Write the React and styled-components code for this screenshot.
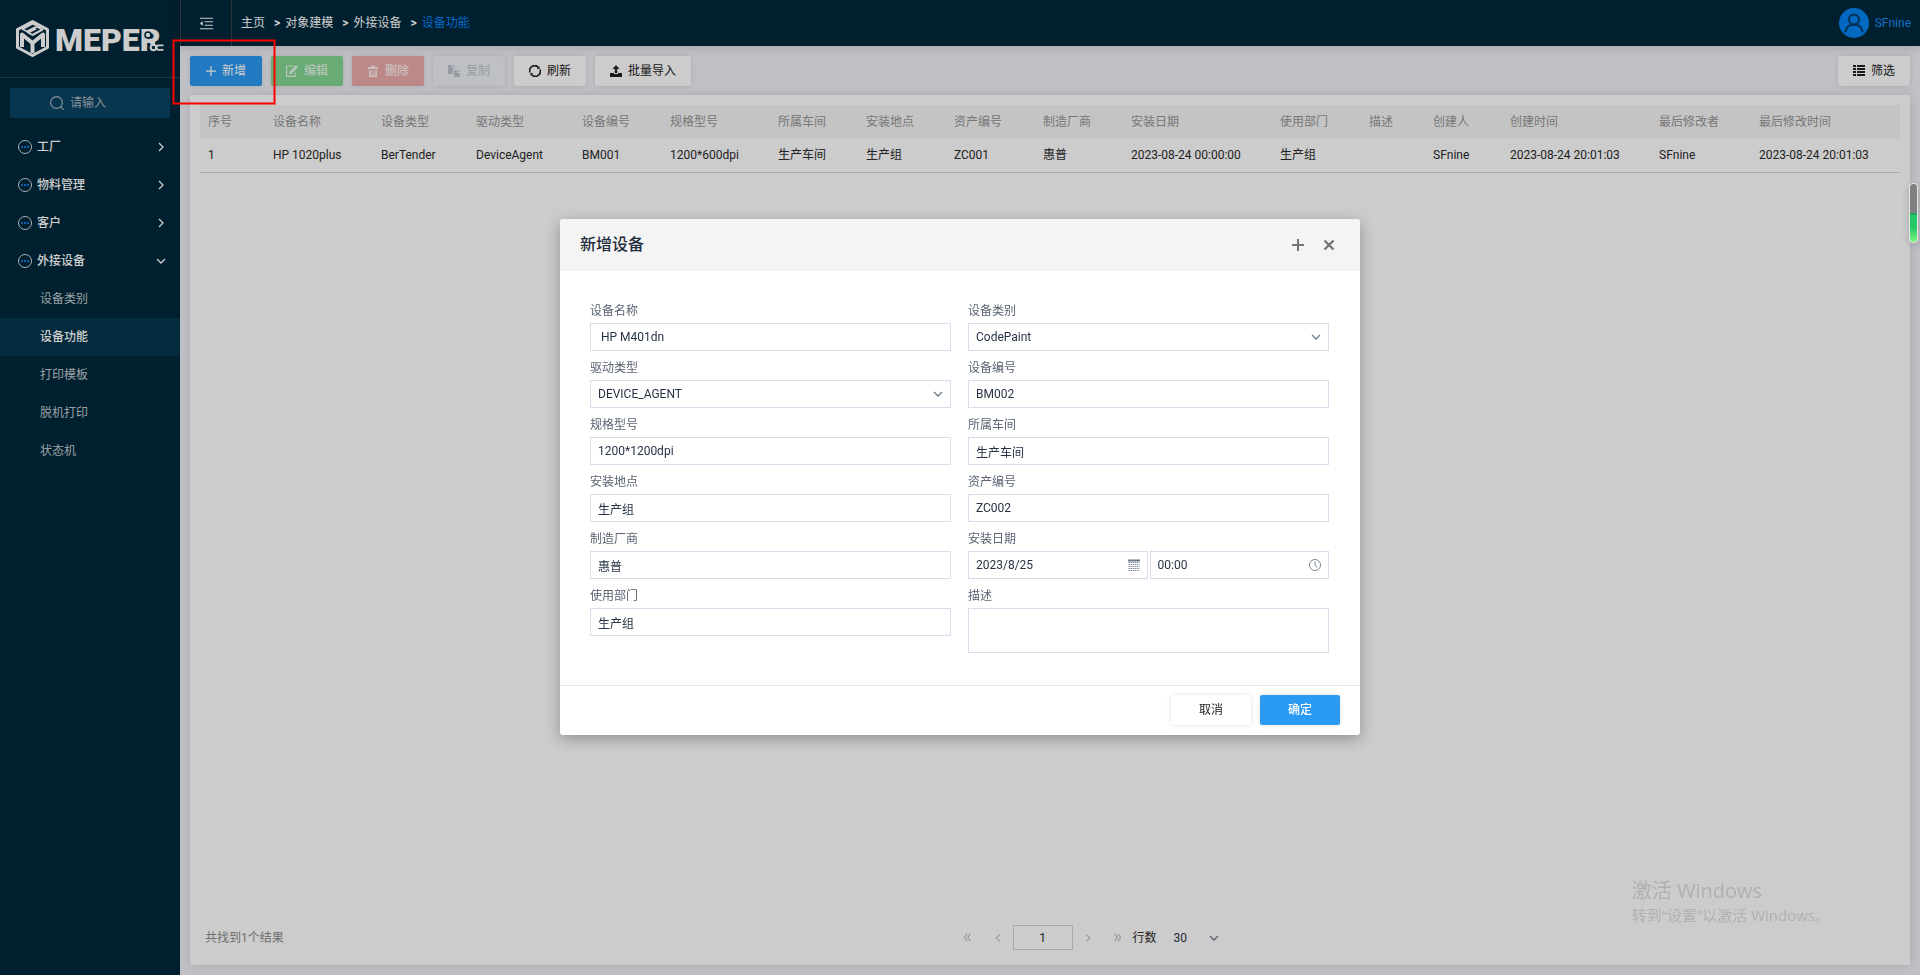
import React, { useState } from "react";
import styled, { createGlobalStyle } from "styled-components";
import {
  AiOutlineDoubleLeft,
  AiOutlineDoubleRight,
  AiOutlineLeft,
  AiOutlineMenuFold,
  AiOutlineRight,
} from "react-icons/ai";

const GlobalStyle = createGlobalStyle`
  * {
    box-sizing: border-box;
  }

  body {
    margin: 0;
    font-family: Roboto, "Noto Sans CJK SC", sans-serif;
    font-size: 12px;
    line-height: 18px;
    color: #2b2b2b;
  }

  button,
  input,
  select,
  textarea {
    font: inherit;
    color: inherit;
    margin: 0;
  }

  a {
    color: inherit;
    text-decoration: none;
  }

  svg {
    display: block;
    flex-shrink: 0;
  }
`;

const Base = styled.div`
  display: flex;
  min-height: 100vh;
  background: #f0f1f7;
`;

/* sidebar */

const Sidebar = styled.aside`
  flex: 0 0 180px;
  background: #00283b;
  color: #fff;
`;

const LogoBox = styled.div`
  height: 78px;
  padding: 17px 0 0 14px;
  border-bottom: 1px solid #34414a;
`;

const SearchBox = styled.label`
  display: flex;
  align-items: center;
  gap: 6px;
  height: 30px;
  margin: 10px;
  padding-left: 40px;
  border-radius: 2px;
  background: #0b4363;
  color: #a9b5be;
`;

const SearchInput = styled.input`
  width: 80px;
  padding: 0;
  border: 0;
  outline: 0;
  background: transparent;

  &::placeholder {
    color: #a9b5be;
    opacity: 1;
  }
`;

const MenuItem = styled.a`
  display: flex;
  align-items: center;
  gap: 5px;
  height: 38px;
  padding: 0 14px 0 18px;
  font-weight: 500;

  svg:last-child {
    margin-left: auto;
  }
`;

const SubMenuItem = styled.a`
  display: flex;
  align-items: center;
  height: 38px;
  padding-left: 40px;
  background: ${(props) => (props.$active ? "#05354d" : "transparent")};
  color: ${(props) => (props.$active ? "#fff" : "#c3c9ce")};
  font-weight: ${(props) => (props.$active ? 500 : 400)};
`;

/* header */

const Main = styled.div`
  flex: 1;
  min-width: 0;
  display: flex;
  flex-direction: column;
`;

const Header = styled.header`
  display: flex;
  align-items: center;
  height: 46px;
  padding-right: 9px;
  background: #00283b;
  color: #fff;
  box-shadow: 0 0 10px rgba(0, 0, 0, 0.2);
`;

const FoldButton = styled.button`
  display: flex;
  align-items: center;
  justify-content: center;
  align-self: stretch;
  width: 52px;
  padding: 0;
  border: 1px solid #34414a;
  border-width: 0 1px;
  background: transparent;
`;

const Breadcrumb = styled.nav`
  display: flex;
  flex: 1;
  padding: 0 9px;
`;

const Crumb = styled.a`
  color: ${(props) => (props.$current ? "#0583f5" : "#fff")};

  &:not(:first-child)::before {
    content: ">";
    margin: 0 5px 0 9px;
    color: #fff;
    font-weight: 700;
  }
`;

const UserLink = styled.a`
  display: flex;
  align-items: center;
  gap: 6px;
  color: #1b8cf5;
`;

/* content */

const Content = styled.main`
  flex: 1;
  display: flex;
  flex-direction: column;
  gap: 9px;
  padding: 10px;
`;

const Toolbar = styled.div`
  display: flex;
  gap: 9px;

  button:last-child {
    margin-left: auto;
  }
`;

const variants = {
  primary: { bg: "#2b9af3", color: "#fff" },
  success: { bg: "#82d691", color: "#e4f7e8" },
  danger: { bg: "#ebaaaa", color: "#fdeeee" },
  disabled: { bg: "#eef0f4", color: "#bcc5cf" },
  plain: { bg: "#fff", color: "#222" },
};

const ToolButton = styled.button`
  display: flex;
  align-items: center;
  justify-content: center;
  gap: 6px;
  height: 30px;
  min-width: ${(props) => props.$width || 72}px;
  padding: 0 15px;
  border: 0;
  border-radius: 2px;
  background: ${(props) => variants[props.$variant].bg};
  color: ${(props) => variants[props.$variant].color};
  font-weight: ${(props) => (props.$bold ? 500 : 400)};
  white-space: nowrap;
  box-shadow: 0 0 5px rgba(0, 0, 0, 0.12);
`;

const Panel = styled.section`
  flex: 1;
  display: flex;
  flex-direction: column;
  justify-content: space-between;
  padding: 10px 10px 15px;
  background: #fff;
  box-shadow: 0 0 10px rgba(0, 0, 0, 0.12);
`;

const Table = styled.table`
  width: 100%;
  table-layout: fixed;
  border-collapse: collapse;
  white-space: nowrap;
  text-align: left;

  th {
    height: 34px;
    padding: 0 8px;
    background: #f5f5f5;
    color: #969696;
    font-weight: 400;
  }

  td {
    height: 33px;
    padding: 0 8px;
    border-bottom: 1px solid #d3d9e3;
  }
`;

const PanelFooter = styled.div`
  display: grid;
  grid-template-columns: 44% auto;
  gap: 4px;
  align-items: center;
  padding: 0 5px;
`;

const ResultCount = styled.span`
  color: #8c8c8c;
`;

const Pager = styled.div`
  display: flex;
  align-items: center;
`;

const PageButton = styled.button`
  display: flex;
  align-items: center;
  justify-content: center;
  width: 30px;
  height: 25px;
  padding: 0;
  border: 0;
  background: transparent;
  color: #adadad;
`;

const PageInput = styled.input`
  width: 60px;
  height: 25px;
  border: 1px solid #cdd6e0;
  background: transparent;
  text-align: center;
`;

/* select with its own arrow stacked in one grid cell */

const SelectBox = styled.div`
  display: grid;
  align-items: center;
  color: #273345;

  > * {
    grid-area: 1 / 1;
  }

  svg {
    justify-self: end;
    margin-right: 8px;
    color: #6d7886;
    pointer-events: none;
  }
`;

const RowSelect = styled.select`
  width: 70px;
  height: 25px;
  padding: 0 17px;
  border: 0;
  appearance: none;
  background: transparent;
`;

/* modal */

const Overlay = styled.div`
  position: fixed;
  inset: 0;
  display: flex;
  align-items: center;
  justify-content: center;
  padding-bottom: 21px;
  background: rgba(0, 0, 0, 0.2);
`;

const Modal = styled.form`
  width: 800px;
  max-width: 100%;
  border-radius: 3px;
  overflow: hidden;
  background: #fff;
  box-shadow: 0 4px 16px rgba(0, 0, 0, 0.3);
`;

const ModalHeader = styled.div`
  display: flex;
  align-items: center;
  gap: 18px;
  height: 52px;
  padding: 0 24px 0 20px;
  background: #f4f4f4;
`;

const ModalTitle = styled.h2`
  flex: 1;
  margin: 0;
  font-size: 16px;
  line-height: 24px;
  font-weight: 500;
  color: #1f2d3d;
`;

const IconButton = styled.button`
  padding: 0;
  border: 0;
  background: transparent;
  color: #757575;
`;

const ModalBody = styled.div`
  display: grid;
  grid-template-columns: 1fr 1fr;
  gap: 5px 17px;
  padding: 28px 31px 32px 30px;
`;

const Field = styled.div`
  display: flex;
  flex-direction: column;
`;

const FieldLabel = styled.label`
  height: 24px;
  line-height: 24px;
  color: #5a6473;
`;

const fieldBox = `
  width: 100%;
  border: 1px solid #d9dcea;
  border-radius: 0;
  background: #fff;
  color: #273345;
  outline: 0;
`;

const TextInput = styled.input`
  ${fieldBox}
  height: 28px;
  padding: 0 7px;
`;

const FormSelect = styled.select`
  ${fieldBox}
  height: 28px;
  padding: 0 7px;
  appearance: none;
`;

const TextArea = styled.textarea`
  ${fieldBox}
  height: 45px;
  padding: 5px 7px;
  resize: none;
`;

const DateTime = styled.div`
  display: grid;
  grid-template-columns: 1fr 1fr;
  gap: 2px;
`;

const ModalFooter = styled.div`
  display: flex;
  justify-content: flex-end;
  gap: 9px;
  padding: 9px 20px 10px;
  border-top: 1px solid #e6e8ec;
`;

/* things that float over the page */

const Watermark = styled.div`
  position: fixed;
  right: 90px;
  bottom: 49px;
  font-family: "Open Sans", "Noto Sans CJK SC", sans-serif;
  font-size: 15px;
  line-height: 22px;
  color: #b0b0b0;
  pointer-events: none;
`;

const WatermarkTitle = styled.div`
  font-size: 20px;
  line-height: 26px;
`;

const Highlight = styled.div`
  position: absolute;
  left: 173px;
  top: 40px;
  width: 102px;
  height: 64px;
  border: 1px solid #f00;
  box-shadow: 0 0 0 1px rgba(255, 0, 0, 0.5),
    inset 0 0 0 1px rgba(255, 0, 0, 0.5);
  pointer-events: none;
`;

const Gauge = styled.div`
  position: fixed;
  right: 2px;
  top: 183px;
  width: 9px;
  height: 60px;
  border: 1px solid #e6e6e6;
  border-radius: 4px;
  background: linear-gradient(
    #808080 0 50%,
    #1aa85c 50% 53%,
    #25c866 54% 75%,
    #7df57f
  );
  box-shadow: 0 2px 8px rgba(0, 0, 0, 0.2);
`;

const Logo = () => (
  <svg width="152" height="44" viewBox="14 17 152 44" role="img">
    <g fill="none" stroke="#fff" strokeLinejoin="round">
      <path d="M32.5 21.5 47.5 29.5V47.5L32.5 55.5 17.5 47.5V29.5Z" strokeWidth="3" />
      <path d="M22 47V34.5L32.5 43 43 34.5V47" strokeWidth="4" />
      <path d="M32.5 41V53" strokeWidth="4" />
      <path
        d="M37 25.5 32.5 23.5 22.5 29 27 31.5 37 26.5 42.5 29.5 32.5 35 28 32.5 36 28.5"
        strokeWidth="2"
      />
    </g>
    <text
      x="55"
      y="51"
      fill="#fff"
      fontFamily="Roboto, sans-serif"
      fontSize="32"
      fontWeight="900"
    >
      MEPER
    </text>
    <circle cx="148" cy="35" r="3" fill="#fff" stroke="#00283b" strokeWidth="1.5" />
    <path d="M155 42h8v10h-8z" fill="#00283b" />
    <circle cx="153.500" cy="47.500" r="2.800" fill="#00283b" stroke="#fff" strokeWidth="2" />
    <path d="M163.500 45.300h-5.500l-2 2.200 2 2.300h5.500" fill="none" stroke="#fff" strokeWidth="1.800" />
  </svg>
);

const MenuDotIcon = () => (
  <svg width="14" height="14" viewBox="0 0 14 14">
    <circle cx="7" cy="7" r="6.500" fill="none" stroke="#d8dde0" />
    <path d="M3 6h2v2H3zM6 6h2v2H6zM9 6h2v2H9z" fill="#0b74d1" />
  </svg>
);

const SearchIcon = () => (
  <svg width="14" height="14" viewBox="0 0 14 14">
    <g fill="none" stroke="currentColor" strokeWidth="1.200">
      <circle cx="6.500" cy="6.500" r="5.900" />
      <path d="M10.700 10.700l3 3" />
    </g>
  </svg>
);

const ChevronDown = () => (
  <svg width="10" height="10" viewBox="0 0 10 10">
    <path d="M1 3l4 4 4-4" fill="none" stroke="currentColor" strokeWidth="1.300" />
  </svg>
);

const ChevronRight = () => (
  <svg width="10" height="10" viewBox="0 0 10 10">
    <path d="M3 1l4 4-4 4" fill="none" stroke="currentColor" strokeWidth="1.300" />
  </svg>
);

const AvatarIcon = () => (
  <svg width="30" height="30" viewBox="0 0 30 30">
    <circle cx="15" cy="15" r="15" fill="#0483f0" />
    <g fill="none" stroke="#053c66" strokeWidth="2" strokeLinecap="round">
      <circle cx="15" cy="11.500" r="5" />
      <path d="M6.500 23.500c1-4.500 4.500-7 8.500-7s7.500 2.500 8.500 7" />
    </g>
  </svg>
);

const PlusIcon = ({ size = 10, stroke = 1.5 }) => (
  <svg width={size} height={size} viewBox="0 0 12 12">
    <path d="M6 0v12M0 6h12" stroke="currentColor" strokeWidth={stroke} />
  </svg>
);

const CloseIcon = () => (
  <svg width="14" height="14" viewBox="0 0 14 14">
    <path d="M2.500 2.500l9 9M11.500 2.500l-9 9" stroke="currentColor" strokeWidth="2.400" />
  </svg>
);

const EditIcon = () => (
  <svg width="12" height="12" viewBox="0 0 12 12">
    <path d="M7.500 1H.6v10.400H9V7.500" fill="none" stroke="currentColor" strokeWidth="1.200" />
    <path d="M9.800 0 12 2 6 8.400 3 9.400 4 6.300Z" fill="currentColor" />
  </svg>
);

const TrashIcon = () => (
  <svg width="12" height="12" viewBox="0 0 12 12">
    <path d="M1 2h3V.5h4V2h3v2H1z" fill="currentColor" />
    <path d="M2.800 5v6.200h6.400V5" fill="none" stroke="currentColor" strokeWidth="1.800" />
    <path d="M5 5v5M7 5v5" stroke="currentColor" strokeWidth=".8" />
  </svg>
);

const CopyIcon = () => (
  <svg width="12" height="12" viewBox="0 0 12 12">
    <path d="M0 0h4v3h3v1H5v5H0zM5 0l2 2H5z" fill="currentColor" />
    <path d="M6 5h3v3h3v4H6zM10 5l2 2h-2z" fill="currentColor" />
  </svg>
);

const RefreshIcon = () => (
  <svg width="12" height="12" viewBox="0 0 12 12">
    <g fill="none" stroke="currentColor" strokeWidth="1.600">
      <path d="M1 7.500A5 5 0 0 1 9.500 2.500" />
      <path d="M11 4.500A5 5 0 0 1 2.500 9.500" />
    </g>
    <path d="M10.600 1.200v2.800H7.800zM1.400 10.800V8h2.800z" fill="currentColor" />
  </svg>
);

const UploadIcon = () => (
  <svg width="12" height="12" viewBox="0 0 12 12">
    <path
      d="M6 0l3.500 4H7.200v4H4.800V4H2.500zM0 8h4v1h4V8h4v4H0z"
      fill="currentColor"
    />
  </svg>
);

const ListIcon = () => (
  <svg width="12" height="12" viewBox="0 0 12 12">
    <path
      d="M0 0h3v2H0zM4 0h8v2H4zM0 3h3v2H0zM4 3h8v2H4zM0 6h3v2H0zM4 6h8v2H4zM0 9h3v2H0zM4 9h8v2H4z"
      fill="currentColor"
    />
  </svg>
);

const CalendarIcon = () => (
  <svg width="12" height="12" viewBox="0 0 12 12">
    <path d="M0 .5h12v2H0z" fill="#6d7886" />
    <path
      d="M.5 3.500h11M.5 5.500h11M.5 7.500h11M.5 9.500h11M.5 11.500h11"
      stroke="#7c8794"
      strokeDasharray="1.500 .6"
    />
  </svg>
);

const ClockIcon = () => (
  <svg width="12" height="12" viewBox="0 0 12 12">
    <g fill="none" stroke="#7c8794">
      <circle cx="6" cy="6" r="5.500" />
      <path d="M6 2.500V6l2 2.500" />
    </g>
  </svg>
);

const menus = ["工厂", "物料管理", "客户"];
const subMenus = ["设备类别", "设备功能", "打印模板", "脱机打印", "状态机"];
const crumbs = ["主页", "对象建模", "外接设备", "设备功能"];

const columns = [
  { title: "序号", width: 65, value: "1" },
  { title: "设备名称", width: 108, value: "HP 1020plus" },
  { title: "设备类型", width: 95, value: "BerTender" },
  { title: "驱动类型", width: 106, value: "DeviceAgent" },
  { title: "设备编号", width: 88, value: "BM001" },
  { title: "规格型号", width: 108, value: "1200*600dpi" },
  { title: "所属车间", width: 88, value: "生产车间" },
  { title: "安装地点", width: 88, value: "生产组" },
  { title: "资产编号", width: 89, value: "ZC001" },
  { title: "制造厂商", width: 88, value: "惠普" },
  { title: "安装日期", width: 149, value: "2023-08-24 00:00:00" },
  { title: "使用部门", width: 89, value: "生产组" },
  { title: "描述", width: 64, value: "" },
  { title: "创建人", width: 77, value: "SFnine" },
  { title: "创建时间", width: 149, value: "2023-08-24 20:01:03" },
  { title: "最后修改者", width: 100, value: "SFnine" },
  { title: "最后修改时间", value: "2023-08-24 20:01:03" },
];

const fields = [
  { name: "deviceName", label: "设备名称" },
  { name: "category", label: "设备类别", type: "select" },
  { name: "driver", label: "驱动类型", type: "select" },
  { name: "deviceNo", label: "设备编号" },
  { name: "spec", label: "规格型号" },
  { name: "workshop", label: "所属车间" },
  { name: "place", label: "安装地点" },
  { name: "assetNo", label: "资产编号" },
  { name: "maker", label: "制造厂商" },
  { name: "date", label: "安装日期", type: "datetime" },
  { name: "department", label: "使用部门" },
  { name: "remark", label: "描述", type: "textarea" },
];

function App() {
  const [form, setForm] = useState({
    deviceName: " HP M401dn",
    category: "CodePaint",
    driver: "DEVICE_AGENT",
    deviceNo: "BM002",
    spec: "1200*1200dpi",
    workshop: "生产车间",
    place: "生产组",
    assetNo: "ZC002",
    maker: "惠普",
    date: "2023/8/25",
    time: "00:00",
    department: "生产组",
    remark: "",
  });

  const onChangeHandler = (event) => {
    setForm({ ...form, [event.target.name]: event.target.value });
  };

  const renderControl = (field) => {
    const common = {
      id: field.name,
      name: field.name,
      value: form[field.name],
      onChange: onChangeHandler,
    };

    if (field.type === "select") {
      return (
        <SelectBox>
          <FormSelect {...common}>
            <option>{form[field.name]}</option>
          </FormSelect>
          <ChevronDown />
        </SelectBox>
      );
    }
    if (field.type === "textarea") {
      return <TextArea {...common} />;
    }
    if (field.type === "datetime") {
      return (
        <DateTime>
          <SelectBox>
            <TextInput {...common} />
            <CalendarIcon />
          </SelectBox>
          <SelectBox>
            <TextInput
              name="time"
              aria-label="时间"
              value={form.time}
              onChange={onChangeHandler}
            />
            <ClockIcon />
          </SelectBox>
        </DateTime>
      );
    }
    return <TextInput type="text" {...common} />;
  };

  return (
    <>
      <GlobalStyle />
      <Base>
        <Sidebar>
          <LogoBox>
            <Logo />
          </LogoBox>
          <SearchBox>
            <SearchIcon />
            <SearchInput type="text" placeholder="请输入" aria-label="请输入" />
          </SearchBox>
          <nav>
            {menus.map((menu) => (
              <MenuItem href="#" key={menu}>
                <MenuDotIcon />
                {menu}
                <ChevronRight />
              </MenuItem>
            ))}
            <MenuItem href="#">
              <MenuDotIcon />
              外接设备
              <ChevronDown />
            </MenuItem>
            {subMenus.map((menu) => (
              <SubMenuItem href="#" key={menu} $active={menu === "设备功能"}>
                {menu}
              </SubMenuItem>
            ))}
          </nav>
        </Sidebar>

        <Main>
          <Header>
            <FoldButton type="button" aria-label="折叠">
              <AiOutlineMenuFold size={17} />
            </FoldButton>
            <Breadcrumb>
              {crumbs.map((crumb, index) => (
                <Crumb
                  href="#"
                  key={crumb}
                  $current={index === crumbs.length - 1}
                >
                  {crumb}
                </Crumb>
              ))}
            </Breadcrumb>
            <UserLink href="#">
              <AvatarIcon />
              SFnine
            </UserLink>
          </Header>

          <Content>
            <Toolbar>
              <ToolButton type="button" $variant="primary">
                <PlusIcon />
                新增
              </ToolButton>
              <ToolButton type="button" $variant="success" $bold>
                <EditIcon />
                编辑
              </ToolButton>
              <ToolButton type="button" $variant="danger" $bold>
                <TrashIcon />
                删除
              </ToolButton>
              <ToolButton type="button" $variant="disabled" disabled>
                <CopyIcon />
                复制
              </ToolButton>
              <ToolButton type="button" $variant="plain">
                <RefreshIcon />
                刷新
              </ToolButton>
              <ToolButton type="button" $variant="plain">
                <UploadIcon />
                批量导入
              </ToolButton>
              <ToolButton type="button" $variant="plain">
                <ListIcon />
                筛选
              </ToolButton>
            </Toolbar>

            <Panel>
              <Table>
                <colgroup>
                  {columns.map((column) => (
                    <col key={column.title} width={column.width} />
                  ))}
                </colgroup>
                <thead>
                  <tr>
                    {columns.map((column) => (
                      <th key={column.title}>{column.title}</th>
                    ))}
                  </tr>
                </thead>
                <tbody>
                  <tr>
                    {columns.map((column) => (
                      <td key={column.title}>{column.value}</td>
                    ))}
                  </tr>
                </tbody>
              </Table>

              <PanelFooter>
                <ResultCount>共找到1个结果</ResultCount>
                <Pager>
                  <PageButton type="button" aria-label="首页">
                    <AiOutlineDoubleLeft size={11} />
                  </PageButton>
                  <PageButton type="button" aria-label="上一页">
                    <AiOutlineLeft size={10} />
                  </PageButton>
                  <PageInput type="text" defaultValue="1" aria-label="页码" />
                  <PageButton type="button" aria-label="下一页">
                    <AiOutlineRight size={10} />
                  </PageButton>
                  <PageButton type="button" aria-label="末页">
                    <AiOutlineDoubleRight size={11} />
                  </PageButton>
                  <label htmlFor="rows">行数</label>
                  <SelectBox>
                    <RowSelect id="rows" defaultValue="30">
                      <option>30</option>
                    </RowSelect>
                    <ChevronDown />
                  </SelectBox>
                </Pager>
              </PanelFooter>
            </Panel>
          </Content>
        </Main>
      </Base>

      <Overlay>
        <Modal onSubmit={(event) => event.preventDefault()}>
          <ModalHeader>
            <ModalTitle>新增设备</ModalTitle>
            <IconButton type="button" aria-label="最大化">
              <PlusIcon size={12} stroke={2} />
            </IconButton>
            <IconButton type="button" aria-label="关闭">
              <CloseIcon />
            </IconButton>
          </ModalHeader>
          <ModalBody>
            {fields.map((field) => (
              <Field key={field.name}>
                <FieldLabel htmlFor={field.name}>{field.label}</FieldLabel>
                {renderControl(field)}
              </Field>
            ))}
          </ModalBody>
          <ModalFooter>
            <ToolButton type="button" $variant="plain" $width={80}>
              取消
            </ToolButton>
            <ToolButton type="submit" $variant="primary" $width={80} $bold>
              确定
            </ToolButton>
          </ModalFooter>
        </Modal>
      </Overlay>

      <Watermark>
        <WatermarkTitle>激活 Windows</WatermarkTitle>
        转到“设置”以激活 Windows。
      </Watermark>
      <Highlight />
      <Gauge />
    </>
  );
}

export default App;
